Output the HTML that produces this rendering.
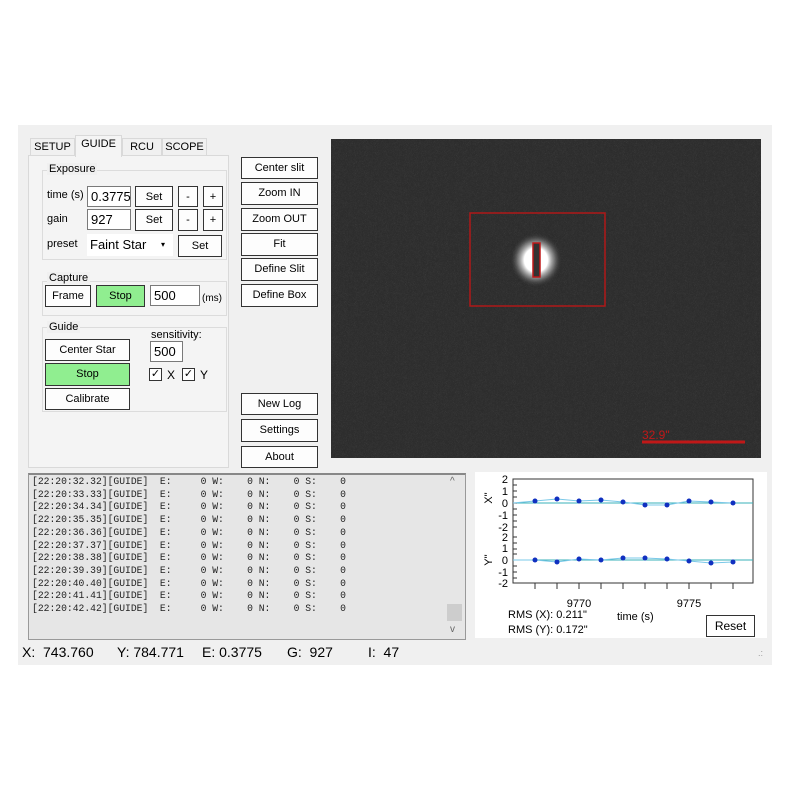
<!DOCTYPE html>
<html><head><style>
body{margin:0;width:790px;height:790px;background:#fff;position:relative;overflow:hidden;font-family:"Liberation Sans",sans-serif;font-size:11px;color:#000}
div,span{position:absolute;box-sizing:border-box}
.win{left:18px;top:125px;width:754px;height:540px;background:#f0f0f0}
.btn{background:#fdfdfd;border:1px solid #333;text-align:center;font-size:11px;line-height:20px}
.g{background:#90ee90}
.tb{background:#fff;border:1px solid #7a7a7a;font-size:13px;padding-left:3px;line-height:19px}
.grp{border:1px solid #dcdcdc}
.gt{background:#f0f0f0;padding:0 2px;font-size:11px}
.tab{top:138px;height:18px;border:1px solid #d9d9d9;border-bottom:none;background:#f0f0f0;font-size:11px;text-align:center;line-height:16px}
pre{margin:0;font-family:"Liberation Mono",monospace;font-size:9.7px;line-height:12.7px;position:absolute;left:32px;top:476px;color:#222}
</style></head><body>
<div class="win"></div>
<div class="tab" style="left:30px;width:45px">SETUP</div>
<div class="tab" style="left:122px;width:40px">RCU</div>
<div class="tab" style="left:162px;width:45px">SCOPE</div>
<div style="left:28px;top:155px;width:201px;height:313px;border:1px solid #d9d9d9;background:#f4f4f4"></div>
<div class="tab" style="left:75px;top:135px;width:47px;height:22px;background:#f4f4f4;border-color:#d9d9d9">GUIDE</div>

<div class="grp" style="left:42px;top:170px;width:185px;height:90px"></div>
<span class="gt" style="left:47px;top:163px">Exposure</span>
<span style="left:47px;top:189px">time (s)</span>
<div class="tb" style="left:87px;top:186px;width:44px;height:21px">0.3775</div>
<div class="btn" style="left:135px;top:186px;width:38px;height:21px">Set</div>
<div class="btn" style="left:178px;top:186px;width:20px;height:21px">-</div>
<div class="btn" style="left:203px;top:186px;width:20px;height:21px">+</div>
<span style="left:47px;top:213px">gain</span>
<div class="tb" style="left:87px;top:209px;width:44px;height:21px">927</div>
<div class="btn" style="left:135px;top:209px;width:38px;height:22px">Set</div>
<div class="btn" style="left:178px;top:209px;width:20px;height:22px">-</div>
<div class="btn" style="left:203px;top:209px;width:20px;height:22px">+</div>
<span style="left:47px;top:238px">preset</span>
<div style="left:87px;top:234px;width:86px;height:22px;background:#fff;font-size:13px;line-height:21px;padding-left:3px">Faint Star<span style="left:74px;top:0;font-size:8px">▾</span></div>
<div class="btn" style="left:178px;top:235px;width:44px;height:22px">Set</div>

<div class="grp" style="left:42px;top:281px;width:185px;height:35px"></div>
<span class="gt" style="left:47px;top:272px">Capture</span>
<div class="btn" style="left:45px;top:285px;width:46px;height:22px">Frame</div>
<div class="btn g" style="left:96px;top:285px;width:49px;height:22px">Stop</div>
<div class="tb" style="left:150px;top:285px;width:50px;height:21px">500</div>
<span style="left:202px;top:293px;font-size:10px">(ms)</span>

<div class="grp" style="left:42px;top:327px;width:185px;height:85px"></div>
<span class="gt" style="left:47px;top:321px">Guide</span>
<div class="btn" style="left:45px;top:339px;width:85px;height:22px">Center Star</div>
<div class="btn g" style="left:45px;top:363px;width:85px;height:23px">Stop</div>
<div class="btn" style="left:45px;top:388px;width:85px;height:22px">Calibrate</div>
<span style="left:151px;top:329px">sensitivity:</span>
<div class="tb" style="left:150px;top:341px;width:33px;height:21px">500</div>
<span style="left:149px;top:368px;width:13px;height:13px;border:1px solid #333;background:#fff;font-size:11px;line-height:11px;text-align:center">✓</span>
<span style="left:167px;top:368px;font-size:12px">X</span>
<span style="left:182px;top:368px;width:13px;height:13px;border:1px solid #333;background:#fff;font-size:11px;line-height:11px;text-align:center">✓</span>
<span style="left:200px;top:368px;font-size:12px">Y</span>

<div class="btn" style="left:241px;top:157px;width:77px;height:22px">Center slit</div>
<div class="btn" style="left:241px;top:182px;width:77px;height:23px">Zoom IN</div>
<div class="btn" style="left:241px;top:208px;width:77px;height:23px">Zoom OUT</div>
<div class="btn" style="left:241px;top:233px;width:77px;height:23px">Fit</div>
<div class="btn" style="left:241px;top:258px;width:77px;height:23px">Define Slit</div>
<div class="btn" style="left:241px;top:284px;width:77px;height:23px">Define Box</div>
<div class="btn" style="left:241px;top:393px;width:77px;height:22px">New Log</div>
<div class="btn" style="left:241px;top:419px;width:77px;height:23px">Settings</div>
<div class="btn" style="left:241px;top:446px;width:77px;height:22px">About</div>

<svg style="position:absolute;left:331px;top:139px" width="430" height="319">
<defs><radialGradient id="s"><stop offset="0" stop-color="#fff"/><stop offset="0.45" stop-color="#fff"/><stop offset="0.7" stop-color="#aaa" stop-opacity="0.6"/><stop offset="1" stop-color="#2f2f2f" stop-opacity="0"/></radialGradient>
<filter id="n"><feTurbulence baseFrequency="0.9" numOctaves="1"/><feColorMatrix values="0 0 0 0 0.25 0 0 0 0 0.25 0 0 0 0 0.25 0 0 0 0.5 0"/></filter></defs>
<rect width="430" height="319" fill="#2c2c2c"/>
<rect width="430" height="319" filter="url(#n)" opacity="0.5"/>
<ellipse cx="205" cy="121" rx="26" ry="27" fill="url(#s)"/>
<rect x="139" y="74" width="135" height="93" fill="none" stroke="#b01818" stroke-width="1.5"/>
<rect x="202" y="104" width="7" height="34" fill="#333" stroke="#c01818" stroke-width="1.5"/>
<line x1="311" y1="303" x2="414" y2="303" stroke="#c01818" stroke-width="3"/>
<text x="311" y="300" fill="#c01818" font-family="Liberation Sans" font-size="12">32.9"</text>
</svg>

<div style="left:28px;top:473px;width:438px;height:167px;background:#e6e6e6;border:1px solid #999;border-top:2px solid #888"></div>
<div style="left:447px;top:604px;width:15px;height:17px;background:#cdcdcd"></div>
<span style="left:450px;top:476px;color:#666;font-size:10px">^</span>
<span style="left:450px;top:624px;color:#666;font-size:10px">v</span>
<pre>[22:20:32.32][GUIDE]  E:     0 W:    0 N:    0 S:    0
[22:20:33.33][GUIDE]  E:     0 W:    0 N:    0 S:    0
[22:20:34.34][GUIDE]  E:     0 W:    0 N:    0 S:    0
[22:20:35.35][GUIDE]  E:     0 W:    0 N:    0 S:    0
[22:20:36.36][GUIDE]  E:     0 W:    0 N:    0 S:    0
[22:20:37.37][GUIDE]  E:     0 W:    0 N:    0 S:    0
[22:20:38.38][GUIDE]  E:     0 W:    0 N:    0 S:    0
[22:20:39.39][GUIDE]  E:     0 W:    0 N:    0 S:    0
[22:20:40.40][GUIDE]  E:     0 W:    0 N:    0 S:    0
[22:20:41.41][GUIDE]  E:     0 W:    0 N:    0 S:    0
[22:20:42.42][GUIDE]  E:     0 W:    0 N:    0 S:    0</pre>

<svg style="position:absolute;left:475px;top:472px" width="292" height="166" font-family="Liberation Sans" font-size="11">
<rect width="292" height="166" fill="#fff"/>
<rect x="38" y="7" width="240" height="104" fill="none" stroke="#333"/>
<line x1="38" y1="31" x2="278" y2="31" stroke="#3ab0b8"/>
<line x1="38" y1="88" x2="278" y2="88" stroke="#3ab0b8"/>
<g stroke="#333"><path d="M38 7h4M38 13h4M38 19h4M38 25h4M38 31h4M38 37h4M38 43h4M38 49h4M38 55h4M38 65h4M38 71h4M38 77h4M38 82h4M38 88h4M38 94h4M38 100h4M38 106h4"/>
<path d="M60 111v6M82 111v6M104 111v6M126 111v6M148 111v6M170 111v6M192 111v6M214 111v6M236 111v6M258 111v6"/></g>
<polyline fill="none" stroke="#7ac8e8" points="38,31 60,29 82,27 104,29 126,28 148,30 170,33 192,33 214,29 236,30 258,31"/>
<polyline fill="none" stroke="#7ac8e8" points="38,88 60,88 82,90 104,87 126,88 148,86 170,86 192,87 214,89 236,91 258,90"/>
<g fill="#1030c0"><circle cx="60" cy="29" r="2.5"/><circle cx="82" cy="27" r="2.5"/><circle cx="104" cy="29" r="2.5"/><circle cx="126" cy="28" r="2.5"/><circle cx="148" cy="30" r="2.5"/><circle cx="170" cy="33" r="2.5"/><circle cx="192" cy="33" r="2.5"/><circle cx="214" cy="29" r="2.5"/><circle cx="236" cy="30" r="2.5"/><circle cx="258" cy="31" r="2.5"/>
<circle cx="60" cy="88" r="2.5"/><circle cx="82" cy="90" r="2.5"/><circle cx="104" cy="87" r="2.5"/><circle cx="126" cy="88" r="2.5"/><circle cx="148" cy="86" r="2.5"/><circle cx="170" cy="86" r="2.5"/><circle cx="192" cy="87" r="2.5"/><circle cx="214" cy="89" r="2.5"/><circle cx="236" cy="91" r="2.5"/><circle cx="258" cy="90" r="2.5"/></g>
<g text-anchor="end"><text x="33" y="11">2</text><text x="33" y="23">1</text><text x="33" y="35">0</text><text x="33" y="47">-1</text><text x="33" y="59">-2</text><text x="33" y="69">2</text><text x="33" y="80">1</text><text x="33" y="92">0</text><text x="33" y="104">-1</text><text x="33" y="115">-2</text></g>
<text transform="translate(17,26) rotate(-90)" text-anchor="middle">X''</text>
<text transform="translate(17,88) rotate(-90)" text-anchor="middle">Y''</text>
<text x="104" y="135" text-anchor="middle">9770</text><text x="214" y="135" text-anchor="middle">9775</text>
<text x="142" y="148">time (s)</text>
<text x="33" y="146">RMS (X): 0.211"</text>
<text x="33" y="161">RMS (Y): 0.172"</text>
</svg>
<div class="btn" style="left:706px;top:615px;width:49px;height:22px;background:#fff;line-height:20px;font-size:12px">Reset</div>

<span style="left:22px;top:644px;font-size:14px">X:&nbsp; 743.760</span>
<span style="left:117px;top:644px;font-size:14px">Y:&nbsp;784.771</span>
<span style="left:202px;top:644px;font-size:14px">E:&nbsp;0.3775</span>
<span style="left:287px;top:644px;font-size:14px">G:&nbsp; 927</span>
<span style="left:368px;top:644px;font-size:14px">I:&nbsp; 47</span>
<span style="left:758px;top:648px;color:#999;font-size:9px">.:</span>
</body></html>
